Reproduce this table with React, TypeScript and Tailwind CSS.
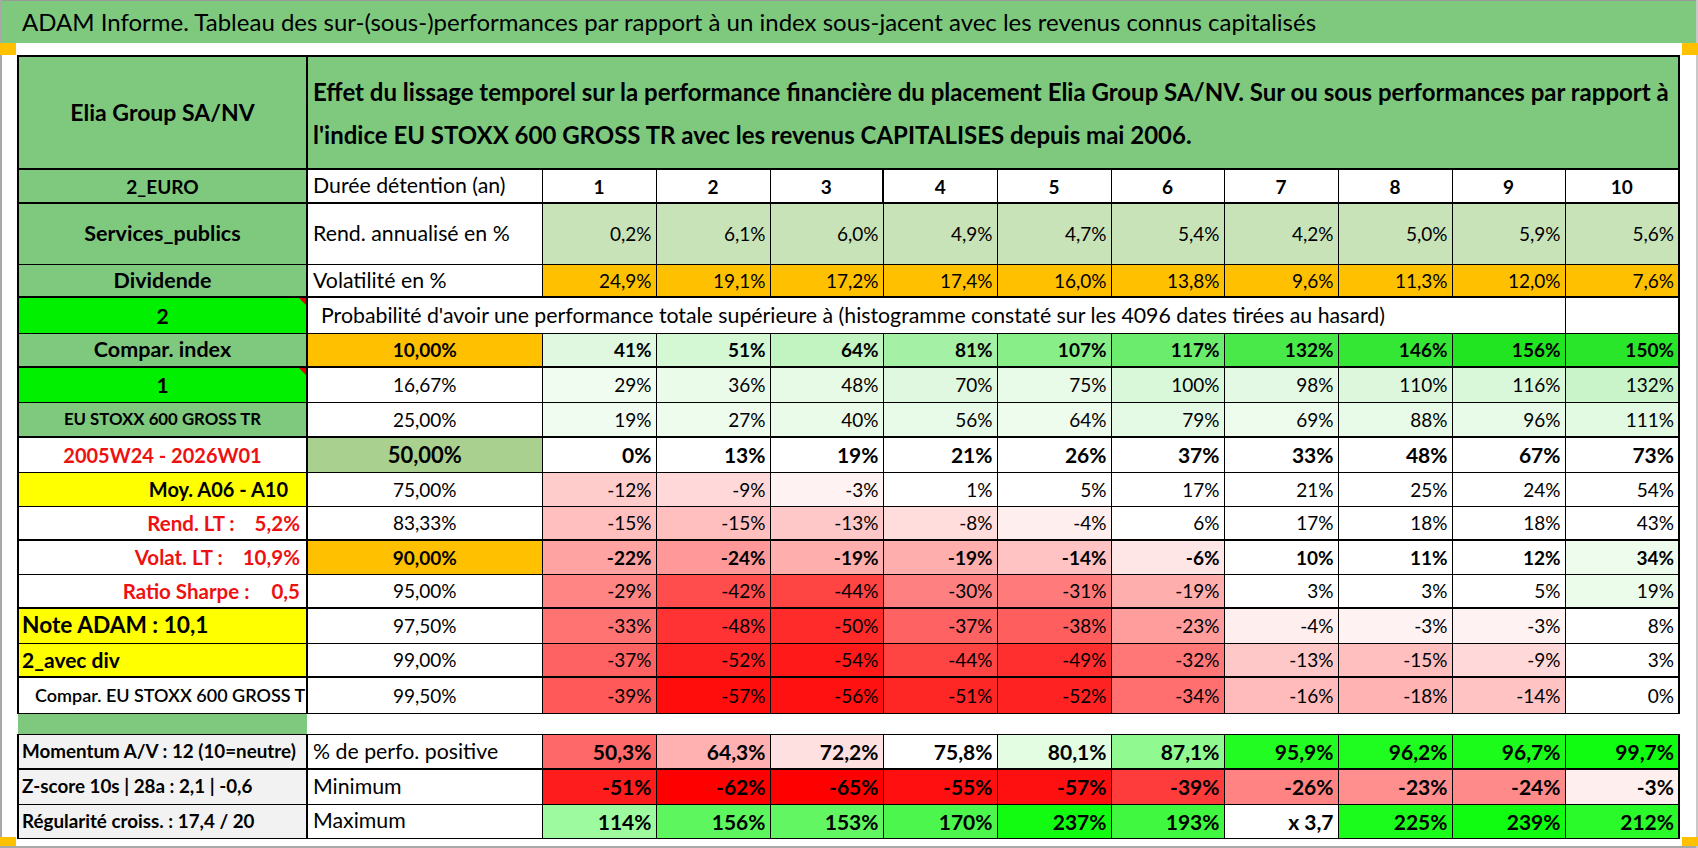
import React from "react";

const FONT = "font-['Lato','Open_Sans','Liberation_Sans',sans-serif]";

type Cell = { v: string; bg: string };

const neg = (v: number) => {
  const t = Math.min(1, Math.max(0, -v / 60));
  const g = Math.round(255 * (1 - t));
  return `rgb(255,${g},${g})`;
};

const W = "#ffffff";

const mk = (vals: number[], bgs: (string | null)[]): Cell[] =>
  vals.map((v, i) => ({ v: `${v}%`, bg: bgs[i] ?? (v < 0 ? neg(v) : W) }));

const probRows: {
  p: string;
  pBg: string;
  pClass: string;
  valClass: string;
  cells: Cell[];
}[] = [
  {
    p: "10,00%",
    pBg: "#ffc000",
    pClass: "font-bold",
    valClass: "font-bold",
    cells: mk(
      [41, 51, 64, 81, 107, 117, 132, 146, 156, 150],
      ["#dff8df", "#d4f7d4", "#c1f4c1", "#a4f0a4", "#88ef88", "#6cec6c", "#48e948", "#34e734", "#20e520", "#2ae62a"]
    ),
  },
  {
    p: "16,67%",
    pBg: W,
    pClass: "",
    valClass: "",
    cells: mk(
      [29, 36, 48, 70, 75, 100, 98, 110, 116, 132],
      ["#effcef", "#eafbea", "#e6fae6", "#dff8df", "#e8fae8", "#d9f7d9", "#e3f9e3", "#dcf7dc", "#d9f7d9", "#c9f4c9"]
    ),
  },
  {
    p: "25,00%",
    pBg: W,
    pClass: "",
    valClass: "",
    cells: mk(
      [19, 27, 40, 56, 64, 79, 69, 88, 96, 111],
      ["#f1fcf1", "#eefcee", "#eafbea", "#e8fae8", "#eefcee", "#e5fae5", "#eefcee", "#e8fae8", "#e8fae8", "#e2f9e2"]
    ),
  },
  {
    p: "50,00%",
    pBg: "#a9d08e",
    pClass: "font-bold text-[22px]",
    valClass: "font-bold text-[21px]",
    cells: mk([0, 13, 19, 21, 26, 37, 33, 48, 67, 73], []),
  },
  { p: "75,00%", pBg: W, pClass: "", valClass: "", cells: mk([-12, -9, -3, 1, 5, 17, 21, 25, 24, 54], []) },
  { p: "83,33%", pBg: W, pClass: "", valClass: "", cells: mk([-15, -15, -13, -8, -4, 6, 17, 18, 18, 43], []) },
  {
    p: "90,00%",
    pBg: "#ffc000",
    pClass: "font-bold",
    valClass: "font-bold",
    cells: mk([-22, -24, -19, -19, -14, -6, 10, 11, 12, 34], [null, null, null, null, null, null, null, null, null, "#eefcee"]),
  },
  {
    p: "95,00%",
    pBg: W,
    pClass: "",
    valClass: "",
    cells: mk([-29, -42, -44, -30, -31, -19, 3, 3, 5, 19], [null, null, null, null, null, null, null, null, null, "#ebfceb"]),
  },
  { p: "97,50%", pBg: W, pClass: "", valClass: "", cells: mk([-33, -48, -50, -37, -38, -23, -4, -3, -3, 8], []) },
  { p: "99,00%", pBg: W, pClass: "", valClass: "", cells: mk([-37, -52, -54, -44, -49, -32, -13, -15, -9, 3], []) },
  { p: "99,50%", pBg: W, pClass: "", valClass: "", cells: mk([-39, -57, -56, -51, -52, -34, -16, -18, -14, 0], []) },
];

type ColA = { content: React.ReactNode; cls: string; bg: string; tri?: boolean };

const RedPair = ({ l, r, gap }: { l: string; r: string; gap: string }) => (
  <span className="inline-flex">
    <span>{l}</span>
    <span className={gap}>{r}</span>
  </span>
);

const colA: ColA[] = [
  { content: "Compar. index", cls: "text-center font-bold text-[21.5px]", bg: "#7fc97f" },
  { content: "1", cls: "text-center font-bold text-[21px]", bg: "#00f000", tri: true },
  { content: "EU STOXX 600 GROSS TR", cls: "text-center font-bold text-[16.8px]", bg: "#7fc97f" },
  { content: "2005W24 - 2026W01", cls: "text-center font-bold text-[20px] text-[#ee1111]", bg: W },
  { content: "Moy. A06 - A10", cls: "text-right font-bold text-[20px] pr-[18px]", bg: "#ffff00" },
  {
    content: <RedPair l="Rend. LT :" r="5,2%" gap="ml-[20px]" />,
    cls: "text-right font-bold text-[20.5px] text-[#ee1111] pr-[6px]",
    bg: W,
  },
  {
    content: <RedPair l="Volat. LT :" r="10,9%" gap="ml-[20px]" />,
    cls: "text-right font-bold text-[20.5px] text-[#ee1111] pr-[6px]",
    bg: W,
  },
  {
    content: <RedPair l="Ratio Sharpe :" r="0,5" gap="ml-[22px]" />,
    cls: "text-right font-bold text-[20.5px] text-[#ee1111] pr-[6px]",
    bg: W,
  },
  { content: "Note ADAM : 10,1", cls: "text-left font-bold text-[22.7px] pl-[3px]", bg: "#ffff00" },
  { content: "2_avec div", cls: "text-left font-bold text-[21px] pl-[3px]", bg: "#ffff00" },
  { content: "Compar. EU STOXX 600 GROSS TR", cls: "text-left font-semibold text-[18px] pl-[16px]", bg: W },
];

const rowH = [34, 35, 35, 35, 34, 34, 34, 34, 35, 34, 36];
const thickBottom = [true, false, true, false, false, true, false, true, false, true, false];

const rend = ["0,2%", "6,1%", "6,0%", "4,9%", "4,7%", "5,4%", "4,2%", "5,0%", "5,9%", "5,6%"];
const vol = ["24,9%", "19,1%", "17,2%", "17,4%", "16,0%", "13,8%", "9,6%", "11,3%", "12,0%", "7,6%"];

const bottomRows: { a: string; b: string; cells: Cell[]; thick?: boolean }[] = [
  {
    a: "Momentum A/V : 12 (10=neutre)",
    b: "% de perfo. positive",
    thick: true,
    cells: [
      { v: "50,3%", bg: "#ff6868" },
      { v: "64,3%", bg: "#ffb0b0" },
      { v: "72,2%", bg: "#ffe0e0" },
      { v: "75,8%", bg: "#ffffff" },
      { v: "80,1%", bg: "#e2fde2" },
      { v: "87,1%", bg: "#90fa90" },
      { v: "95,9%", bg: "#22fc22" },
      { v: "96,2%", bg: "#1ffc1f" },
      { v: "96,7%", bg: "#1bfc1b" },
      { v: "99,7%", bg: "#10fc10" },
    ],
  },
  {
    a: "Z-score 10s | 28a : 2,1 | -0,6",
    b: "Minimum",
    cells: [
      { v: "-51%", bg: "#ff1c1c" },
      { v: "-62%", bg: "#ff0000" },
      { v: "-65%", bg: "#ff0000" },
      { v: "-55%", bg: "#ff0f0f" },
      { v: "-57%", bg: "#ff1010" },
      { v: "-39%", bg: "#ff3c3c" },
      { v: "-26%", bg: "#ff8383" },
      { v: "-23%", bg: "#ff8e8e" },
      { v: "-24%", bg: "#ff8a8a" },
      { v: "-3%", bg: "#ffeeee" },
    ],
  },
  {
    a: "Régularité croiss. : 17,4 / 20",
    b: "Maximum",
    cells: [
      { v: "114%", bg: "#9efa9e" },
      { v: "156%", bg: "#5ef65e" },
      { v: "153%", bg: "#62f662" },
      { v: "170%", bg: "#4cf64c" },
      { v: "237%", bg: "#12fc12" },
      { v: "193%", bg: "#40f840" },
      { v: "x 3,7", bg: "#ffffff" },
      { v: "225%", bg: "#1cfc1c" },
      { v: "239%", bg: "#10fc10" },
      { v: "212%", bg: "#2afa2a" },
    ],
  },
];

const colWidths = [289, 235, 114, 114, 113, 114, 114, 113, 114, 114, 113, 114];

const Tri = () => (
  <span className="absolute right-0 top-0 w-0 h-0 border-l-[7px] border-l-transparent border-t-[7px] border-t-[#e00000]" />
);

export default function App() {
  return (
    <div className={`w-[1698px] h-[848px] bg-white relative overflow-hidden text-black ${FONT}`}>
      {/* frame lines */}
      <div className="absolute left-0 top-0 bottom-0 w-[2px] bg-[#a8a8a8]" />
      <div className="absolute left-0 right-0 bottom-0 h-[2px] bg-[#a8a8a8]" />
      <div className="absolute right-0 top-0 bottom-0 w-[2px] bg-[#c8c8c8]" />

      <div className="h-[43px] bg-[#7fc97f] border-t border-[#9a9a9a] flex items-center pl-[22px] text-[24px] leading-none">
        ADAM Informe. Tableau des sur-(sous-)performances par rapport à un index sous-jacent avec les revenus connus capitalisés
      </div>
      <div className="h-[12px] relative">
        <div className="absolute left-0 top-0 w-[16px] h-[12px] bg-[#ffc000]" />
        <div className="absolute right-0 top-0 w-[16px] h-[12px] bg-[#ffc000]" />
      </div>

      <div className="pl-[17px]">
        <table className="border-collapse table-fixed w-[1661px] text-[19px] leading-none">
          <colgroup>
            {colWidths.map((w, i) => (
              <col key={i} style={{ width: w }} />
            ))}
          </colgroup>
          <tbody>
            {/* header */}
            <tr className="h-[113px]">
              <td className="border-2 border-black bg-[#7fc97f] text-center font-bold text-[23px]">Elia Group SA/NV</td>
              <td colSpan={11} className="border-2 border-black bg-[#7fc97f] font-bold text-[24px] leading-[43px] pl-[5px] pr-[4px] align-middle whitespace-nowrap">
                Effet du lissage temporel sur la performance financière du placement Elia Group SA/NV. Sur ou sous performances par rapport à
                <br />
                l'indice EU STOXX 600 GROSS TR avec les revenus CAPITALISES depuis mai 2006.
              </td>
            </tr>
            {/* durée */}
            <tr className="h-[34px]">
              <td className="border border-black border-l-2 border-r-2 border-b-2 bg-[#7fc97f] text-center font-bold text-[19px]">2_EURO</td>
              <td className="border border-black border-b-2 bg-white pl-[5px] text-[21.3px]">Durée détention (an)</td>
              {Array.from({ length: 10 }, (_, i) => (
                <td key={i} className={`border border-black border-b-2 bg-white text-center font-bold ${i === 3 ? "border-l-2" : ""} ${i === 9 ? "border-r-2" : ""}`}>
                  {i + 1}
                </td>
              ))}
            </tr>
            {/* rend */}
            <tr className="h-[61px]">
              <td className="border border-black border-l-2 border-r-2 bg-[#7fc97f] text-center font-bold text-[21.5px]">Services_publics</td>
              <td className="border border-black bg-white pl-[5px] text-[21.3px]">Rend. annualisé en %</td>
              {rend.map((v, i) => (
                <td key={i} className={`border border-black bg-[#c9e3b9] text-right pr-[4px] ${i === 9 ? "border-r-2" : ""}`}>
                  {v}
                </td>
              ))}
            </tr>
            {/* vol */}
            <tr className="h-[33px]">
              <td className="border border-black border-l-2 border-r-2 border-b-2 bg-[#7fc97f] text-center font-bold text-[21.5px]">Dividende</td>
              <td className="border border-black border-b-2 bg-white pl-[5px] text-[21.3px]">Volatilité en %</td>
              {vol.map((v, i) => (
                <td key={i} className={`border border-black border-b-2 bg-[#ffc000] text-right pr-[4px] ${i === 9 ? "border-r-2" : ""}`}>
                  {v}
                </td>
              ))}
            </tr>
            {/* probabilité */}
            <tr className="h-[36px]">
              <td className="relative border border-black border-l-2 border-r-2 bg-[#00f000] text-center font-bold text-[21px]">
                2
                <Tri />
              </td>
              <td colSpan={10} className="border border-black bg-white pl-[13px] text-[21.3px] whitespace-nowrap overflow-hidden">
                Probabilité d'avoir une performance totale supérieure à (histogramme constaté sur les 4096 dates tirées au hasard)
              </td>
              <td className="border border-black border-r-2 bg-white" />
            </tr>
            {probRows.map((r, ri) => {
              const a = colA[ri];
              const tb = thickBottom[ri] ? "border-b-2" : "";
              return (
                <tr key={ri} style={{ height: rowH[ri] }}>
                  <td className={`relative border border-black border-l-2 border-r-2 ${tb} whitespace-pre overflow-hidden ${a.cls}`} style={{ backgroundColor: a.bg }}>
                    {a.content}
                    {a.tri ? <Tri /> : null}
                  </td>
                  <td className={`border border-black ${tb} text-center ${r.pClass}`} style={{ backgroundColor: r.pBg }}>
                    {r.p}
                  </td>
                  {r.cells.map((c, i) => (
                    <td key={i} className={`border border-black ${tb} text-right pr-[4px] ${r.valClass} ${i === 9 ? "border-r-2" : ""}`} style={{ backgroundColor: c.bg }}>
                      {c.v}
                    </td>
                  ))}
                </tr>
              );
            })}
            {/* gap */}
            <tr className="h-[21px]">
              <td className="bg-[#7fc97f] p-0" />
              <td colSpan={11} className="bg-white p-0" />
            </tr>
            {bottomRows.map((r, ri) => (
              <tr key={ri} className={ri === 2 ? "h-[34px]" : "h-[35px]"}>
                <td className={`border border-black border-l-2 border-r-2 ${r.thick ? "border-b-2" : ""} bg-[#f2f2f2] font-bold text-[18.8px] pl-[3px] whitespace-nowrap overflow-hidden`}>{r.a}</td>
                <td className={`border border-black ${r.thick ? "border-b-2" : ""} bg-white pl-[5px] text-[21.3px]`}>{r.b}</td>
                {r.cells.map((c, i) => (
                  <td key={i} className={`border border-black ${r.thick ? "border-b-2" : ""} text-right pr-[4px] font-bold text-[21px] ${i === 9 ? "border-r-2" : ""}`} style={{ backgroundColor: c.bg }}>
                    {c.v}
                  </td>
                ))}
              </tr>
            ))}
          </tbody>
        </table>
      </div>
      <div className="absolute left-0 bottom-[2px] w-[16px] h-[9px] bg-[#ffc000]" />
      <div className="absolute right-0 bottom-[2px] w-[16px] h-[9px] bg-[#ffc000]" />
    </div>
  );
}
